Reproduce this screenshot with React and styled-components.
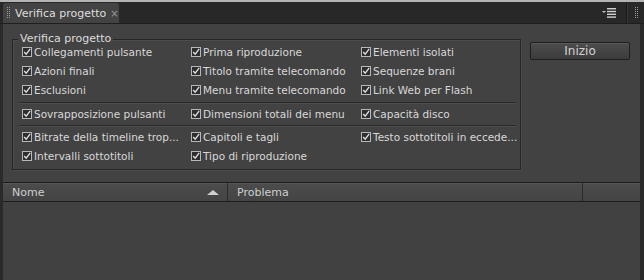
import styled, { createGlobalStyle } from "styled-components";

const GlobalStyle = createGlobalStyle`
  html, body {
    margin: 0;
    padding: 0;
    background: #2a2a2a;
  }
  body {
    font-family: "DejaVu Sans", "Liberation Sans", sans-serif;
    font-size: 11px;
  }
`;

const groups = [
  [
    ["Collegamenti pulsante", "Prima riproduzione", "Elementi isolati"],
    ["Azioni finali", "Titolo tramite telecomando", "Sequenze brani"],
    ["Esclusioni", "Menu tramite telecomando", "Link Web per Flash"],
  ],
  [["Sovrapposizione pulsanti", "Dimensioni totali dei menu", "Capacità disco"]],
  [
    ["Bitrate della timeline trop...", "Capitoli e tagli", "Testo sottotitoli in eccede..."],
    ["Intervalli sottotitoli", "Tipo di riproduzione", null],
  ],
];

const CheckIcon = () => (
  <CheckBox width="10" height="10" viewBox="0 0 10 10">
    <rect x="0.5" y="0.5" width="9" height="9" fill="#2e2e2e" stroke="#b8b8b8" />
    <path d="M2.2 5 L4.2 7.2 L8.2 1.8" fill="none" stroke="#e2e2e2" strokeWidth="1.3" />
  </CheckBox>
);

const Grip = () => (
  <svg width="3" height="12" viewBox="0 0 3 12">
    {[0, 2, 4, 6, 8, 10].map((y) => (
      <g key={y}>
        <rect x="0" y={y} width="1" height="1" fill="#9a9a9a" />
        <rect x="2" y={y} width="1" height="1" fill="#9a9a9a" />
      </g>
    ))}
  </svg>
);

const MenuIcon = () => (
  <svg width="16" height="10" viewBox="0 0 16 10">
    <path d="M0 3 L4 3 L2 5 Z" fill="#c8c8c8" />
    <rect x="5" y="0" width="9" height="1.4" fill="#d0d0d0" />
    <rect x="5" y="2.8" width="9" height="1.4" fill="#d0d0d0" />
    <rect x="5" y="5.6" width="9" height="1.4" fill="#d0d0d0" />
    <rect x="5" y="8.4" width="9" height="1.4" fill="#d0d0d0" />
  </svg>
);

export default function App() {
  return (
    <>
      <GlobalStyle />
      <Window>
        <TopStrip />
        <TabBar>
          <Tab>
            <Grip />
            <TabTitle>Verifica progetto</TabTitle>
            <TabClose>×</TabClose>
          </Tab>
          <TabSpacer />
          <MenuButton>
            <MenuIcon />
          </MenuButton>
          <TabDivider />
          <GripBox>
            <Grip />
          </GripBox>
        </TabBar>
        <Panel>
          <Controls>
            <Group>
              <Legend>Verifica progetto</Legend>
              {groups.map((rows, gi) => (
                <Section key={gi} $first={gi === 0}>
                  {rows.map((row, ri) =>
                    row.map((label, ci) => (
                      <Check key={`${ri}-${ci}`}>
                        {label && (
                          <>
                            <CheckIcon />
                            <span>{label}</span>
                          </>
                        )}
                      </Check>
                    ))
                  )}
                </Section>
              ))}
            </Group>
            <StartButton>Inizio</StartButton>
          </Controls>
          <TableHeader>
            <HeadCell $width="225px">
              <span>Nome</span>
              <SortArrow />
            </HeadCell>
            <HeadCell $width="355px">Problema</HeadCell>
            <HeadCell $width="auto" />
          </TableHeader>
          <TableBody />
        </Panel>
      </Window>
    </>
  );
}

// styles
const Window = styled.div`
  width: 644px;
  height: 280px;
  display: flex;
  flex-direction: column;
  overflow: hidden;
  background: #2a2a2a;
`;

const TopStrip = styled.div`
  height: 2px;
  background: #b4b4b4;
  flex-shrink: 0;
`;

const TabBar = styled.div`
  height: 20px;
  display: flex;
  align-items: stretch;
  padding: 1px 0 0 3px;
  background: #282828;
  border-bottom: 1px solid #1e1e1e;
  flex-shrink: 0;
`;

const Tab = styled.div`
  display: flex;
  align-items: center;
  gap: 4px;
  width: 116px;
  padding-left: 4px;
  box-sizing: border-box;
  background: #434343;
  border-radius: 2px 2px 0 0;
  color: #dedede;
  font-size: 11px;
  white-space: nowrap;
`;

const TabTitle = styled.span`
  margin-left: 1px;
`;

const TabClose = styled.span`
  color: #9a9a9a;
  font-size: 10px;
`;

const TabSpacer = styled.div`
  flex: 1;
`;

const MenuButton = styled.div`
  display: flex;
  align-items: center;
  padding: 0 8px 0 4px;
`;

const TabDivider = styled.div`
  width: 1px;
  background: #181818;
  border-right: 1px solid #363636;
`;

const GripBox = styled.div`
  display: flex;
  align-items: center;
  width: 16px;
  justify-content: center;
`;

const Panel = styled.div`
  flex: 1;
  display: flex;
  flex-direction: column;
  margin: 0 4px 0 3px;
  background: #424242;
`;

const Controls = styled.div`
  display: flex;
  align-items: flex-start;
  gap: 9px;
  padding: 15px 0 0 9px;
  height: 158px;
  box-sizing: border-box;
  flex-shrink: 0;
`;

const Group = styled.div`
  position: relative;
  width: 509px;
  height: 131px;
  box-sizing: border-box;
  border: 1px solid #262626;
  box-shadow: 1px 1px 0 #4c4c4c, inset 1px 1px 0 #4c4c4c;
  padding: 0 4px 0 6px;
`;

const Legend = styled.div`
  position: absolute;
  top: -8px;
  left: 5px;
  padding: 0 2px;
  background: #424242;
  color: #dcdcdc;
  font-size: 11px;
`;

const Section = styled.div`
  display: grid;
  grid-template-columns: 169px 170px 1fr;
  grid-auto-rows: 19px;
  border-top: ${(p) => (p.$first ? "none" : "1px solid #2a2a2a")};
  box-shadow: ${(p) => (p.$first ? "none" : "inset 0 1px 0 #4e4e4e")};
  padding: ${(p) => (p.$first ? "2px 0 3px" : "1px 0 2px")};
`;

const Check = styled.div`
  display: flex;
  align-items: center;
  gap: 2px;
  padding-left: 3px;
  color: #d8d8d8;
  font-size: 10.5px;
  white-space: nowrap;
`;

const CheckBox = styled.svg`
  flex-shrink: 0;
`;

const StartButton = styled.button`
  width: 100px;
  height: 18px;
  margin-top: 3px;
  padding: 0;
  border: 1px solid #1e1e1e;
  border-radius: 2px;
  background: linear-gradient(#4d4d4d, #3c3c3c);
  box-shadow: inset 0 1px 0 #5a5a5a;
  color: #d4d4d4;
  font-family: "DejaVu Sans", "Liberation Sans", sans-serif;
  font-size: 12px;
`;

const TableHeader = styled.div`
  display: flex;
  height: 18px;
  border-top: 1px solid #1c1c1c;
  border-bottom: 1px solid #1c1c1c;
  background: linear-gradient(#4c4c4c, #444444);
  box-shadow: inset 0 1px 0 #555;
  flex-shrink: 0;
`;

const HeadCell = styled.div`
  display: flex;
  align-items: center;
  justify-content: space-between;
  width: ${(p) => p.$width};
  flex: ${(p) => (p.$width === "auto" ? 1 : "none")};
  padding: 0 0 0 9px;
  box-sizing: border-box;
  color: #cfcfcf;
  font-size: 11px;
  border-right: 1px solid #2a2a2a;
  &:last-child {
    border-right: none;
  }
`;

const SortArrow = styled.span`
  width: 0;
  height: 0;
  margin-right: 8px;
  border-left: 6px solid transparent;
  border-right: 6px solid transparent;
  border-bottom: 5px solid #cfcfcf;
`;

const TableBody = styled.div`
  flex: 1;
  background: #414141;
`;
